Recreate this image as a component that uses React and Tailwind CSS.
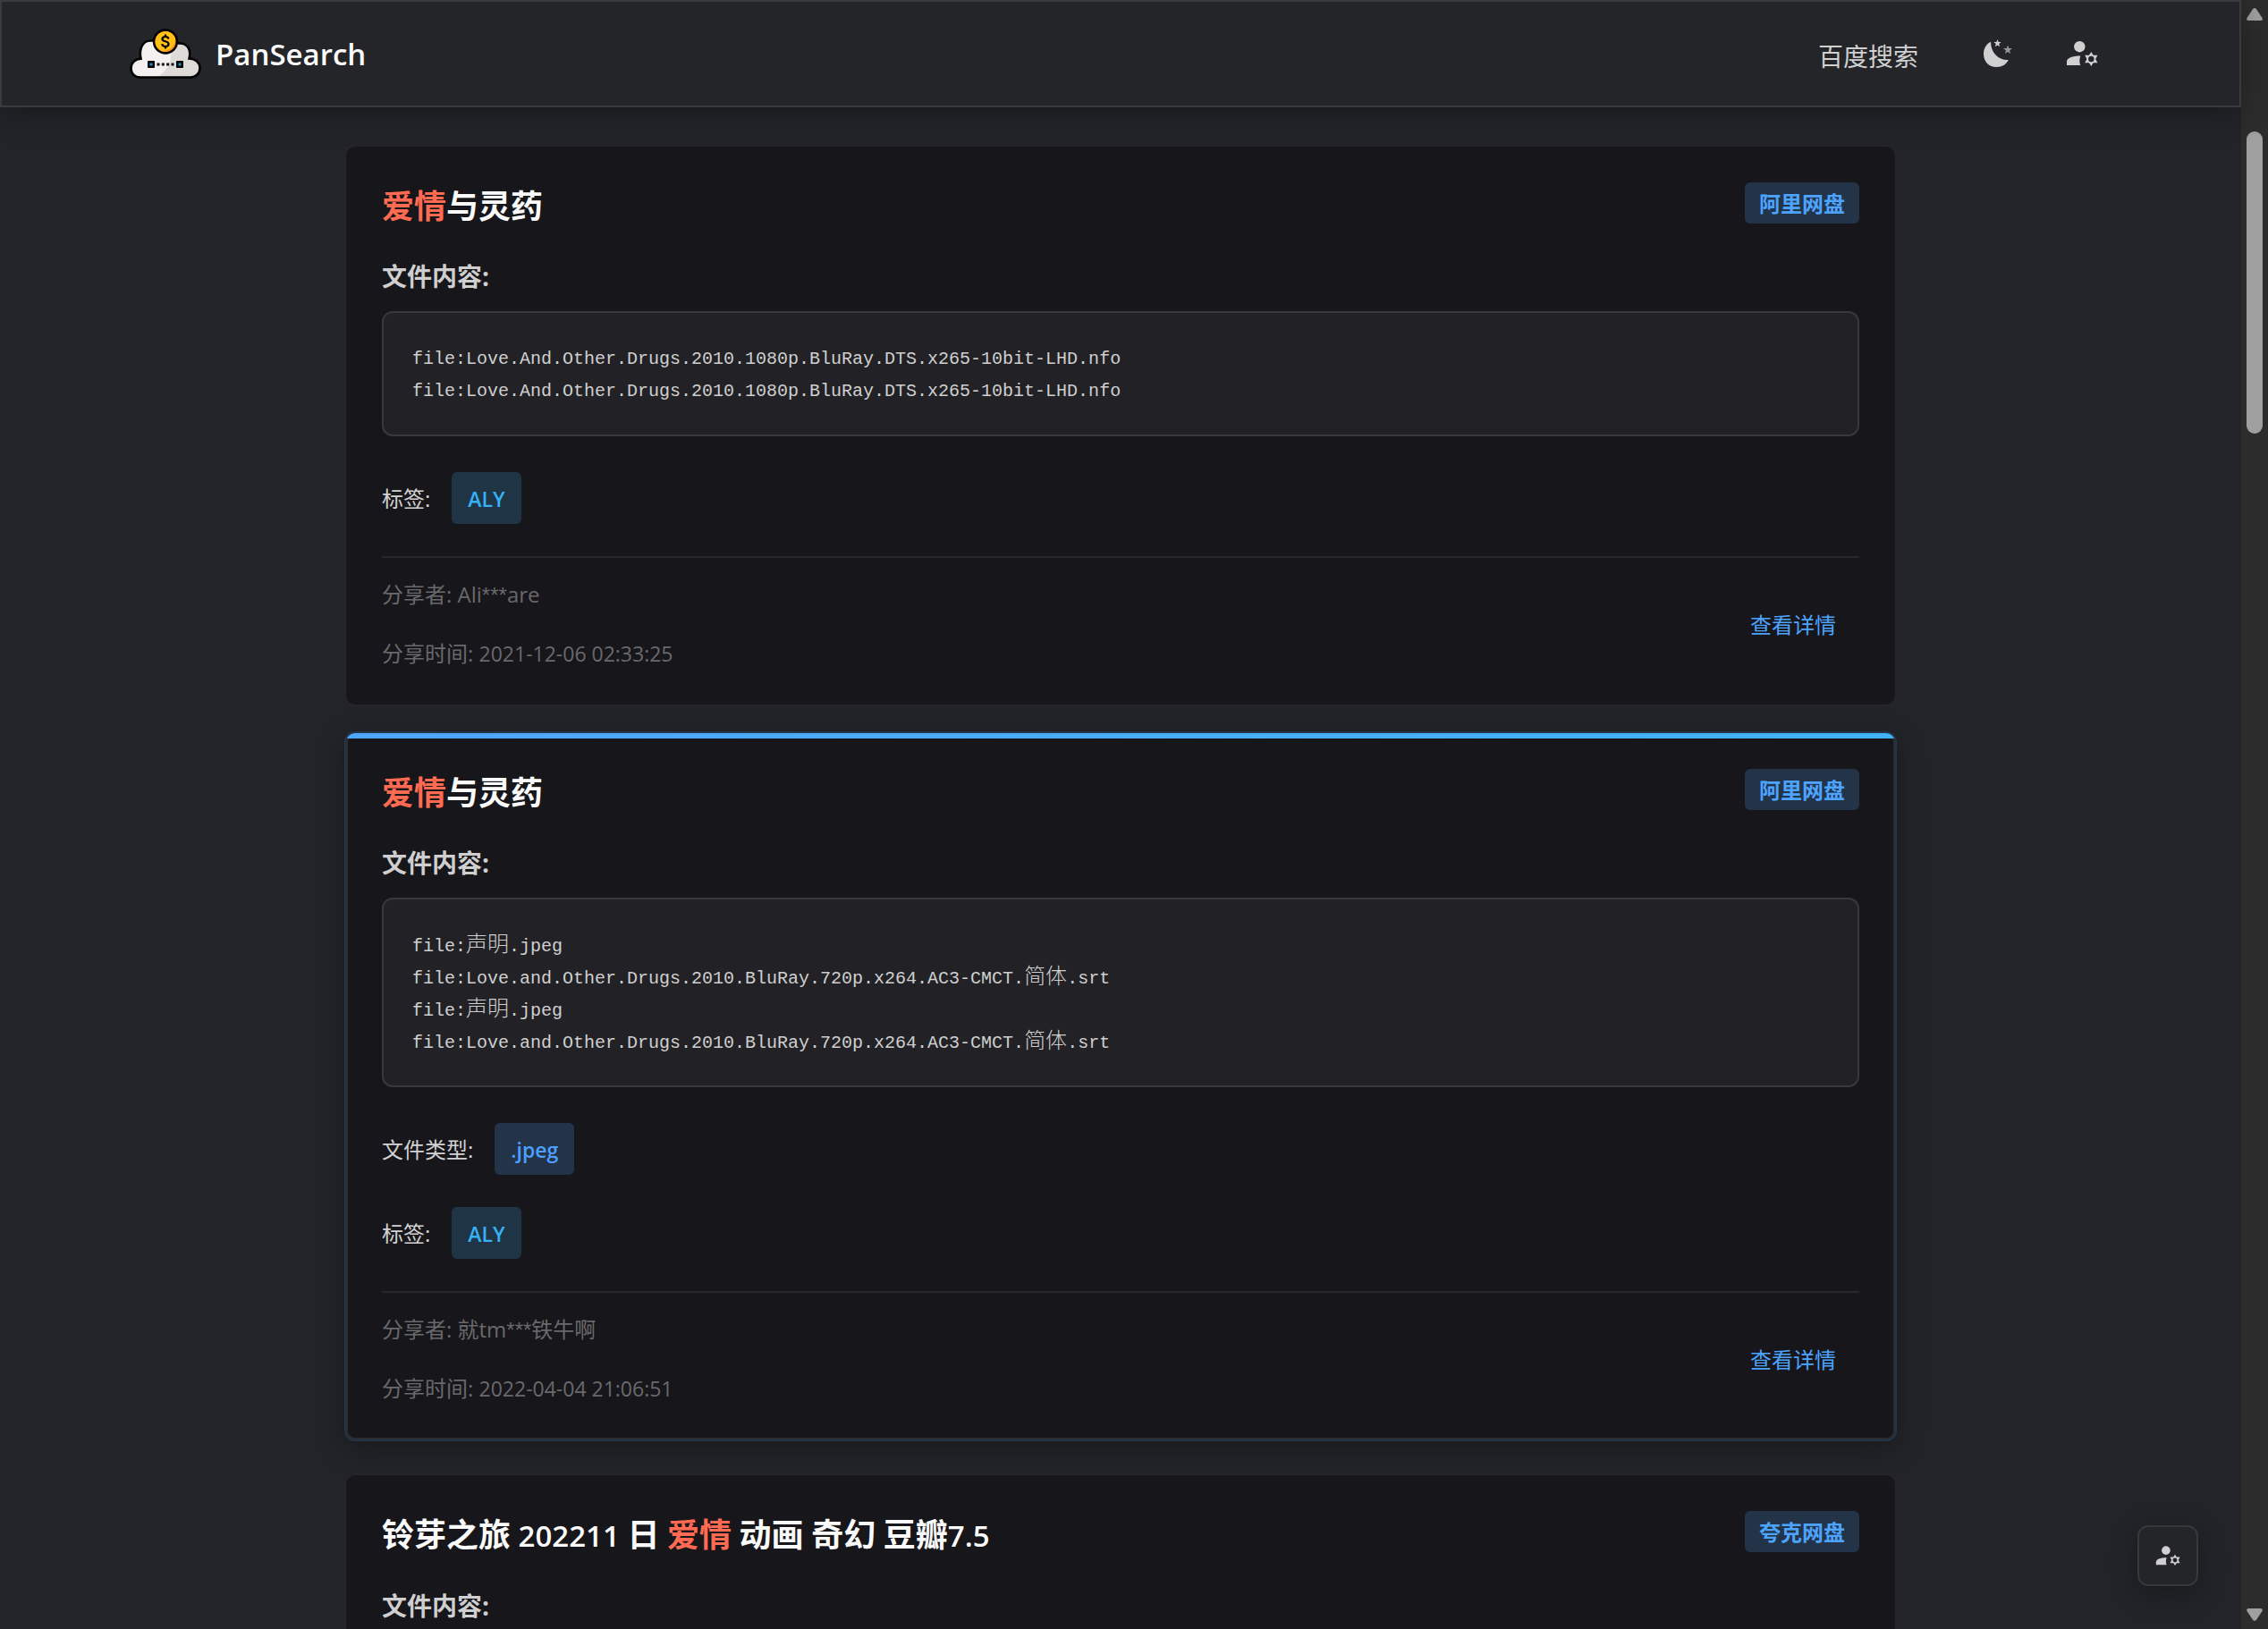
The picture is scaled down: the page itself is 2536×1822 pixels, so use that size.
import React from "react";

const results = [
  {
    id: 1,
    title: [{ cjk: "爱情", hit: true }, { cjk: "与灵药" }],
    source: "阿里网盘",
    files: [
      ["file:Love.And.Other.Drugs.2010.1080p.BluRay.DTS.x265-10bit-LHD.nfo"],
      ["file:Love.And.Other.Drugs.2010.1080p.BluRay.DTS.x265-10bit-LHD.nfo"],
    ],
    tags: ["ALY"],
    sharer: ["Ali", "***", "are"],
    time: "2021-12-06 02:33:25",
  },
  {
    id: 2,
    active: true,
    title: [{ cjk: "爱情", hit: true }, { cjk: "与灵药" }],
    source: "阿里网盘",
    files: [
      ["file:", "声明", ".jpeg"],
      ["file:Love.and.Other.Drugs.2010.BluRay.720p.x264.AC3-CMCT.", "简体", ".srt"],
      ["file:", "声明", ".jpeg"],
      ["file:Love.and.Other.Drugs.2010.BluRay.720p.x264.AC3-CMCT.", "简体", ".srt"],
    ],
    types: [".jpeg"],
    tags: ["ALY"],
    sharer: ["就tm", "***", "铁牛啊"],
    time: "2022-04-04 21:06:51",
  },
  {
    id: 3,
    title: [
      { cjk: "铃芽之旅" },
      { latin: " 202211 " },
      { cjk: "日" },
      { latin: " " },
      { cjk: "爱情", hit: true },
      { latin: " " },
      { cjk: "动画" },
      { latin: " " },
      { cjk: "奇幻" },
      { latin: " " },
      { cjk: "豆瓣" },
      { latin: "7.5" },
    ],
    source: "夸克网盘",
    files: [],
  },
];

function Logo() {
  return (
    <svg viewBox="0 0 80 56" className="h-14 w-20 shrink-0" aria-hidden="true">
      <path
        d="M12 54.5C5.500 54.500 1.500 50 1.500 44.500C1.500 38.500 6 33.800 12.500 33.800C10.200 23 14 13.500 23.500 13.500H32L50 16.500H56C65 16.500 69 24 66.500 33.500C73.500 33.500 78.500 38 78.500 44.300C78.500 50 74 54.500 68 54.500Z"
        fill="#f4f0ef"
      />
      <path
        d="M46.500 27C46 40 41 48 31 54.500H68C74 54.500 78.500 50 78.500 44.300C78.500 38 73.500 33.500 66.500 33.500C69 24 65 16.500 56 16.500Z"
        fill="#dedad8"
      />
      <path
        d="M12 54.500C5.500 54.500 1.500 50 1.500 44.500C1.500 38.500 6 33.800 12.500 33.800C10.200 23 14 13.500 23.500 13.500H28M54 16.500H56C65 16.500 69 24 66.500 33.500C73.500 33.500 78.500 38 78.500 44.300C78.500 50 74 54.500 68 54.500H12"
        fill="none"
        stroke="#000"
        strokeWidth="2.600"
      />
      <circle cx="40" cy="14.500" r="12.900" fill="#ff8a1e" stroke="#000" strokeWidth="2.600" />
      <path d="M40 2.900a11.600 11.600 0 0 0-4 22.400C46 25 51 19 51 11A11.600 11.600 0 0 0 40 2.900Z" fill="#ffc214" />
      <path
        d="M43.500 11.500C43 9.500 41.500 9 40 9C37.500 9 36.500 10.300 36.500 11.700C36.500 15.500 43.500 13 43.500 17.300C43.500 19 42 20 40 20C38 20 36.500 19.200 36.200 17.200M40 6.500V9M40 20V22.500"
        fill="none"
        stroke="#000"
        strokeWidth="2.200"
      />
      <rect x="20" y="36" width="8" height="8" rx="1" fill="#000" />
      <rect x="22.500" y="38.500" width="3" height="3" fill="#1989d8" />
      <rect x="52" y="36" width="8" height="8" rx="1" fill="#000" />
      <rect x="54.500" y="38.500" width="3" height="3" fill="#1989d8" />
      <path d="M30.500 40H50" stroke="#111" strokeWidth="3" strokeDasharray="3 2.330" />
    </svg>
  );
}

function MoonIcon() {
  return (
    <svg viewBox="0 0 32 32" className="size-8" fill="currentColor" aria-hidden="true">
      <path d="M8 2.800C3 5 0 10.500 0 16.500C0 25 6 31 14.500 31C20.500 31 25.500 28 27.800 23C18 24 8 16 8 2.800Z" />
      <path d="m15.500 0 1.100 3 3.100.1-2.500 2 .9 3.100-2.600-1.800-2.600 1.800.9-3.100-2.500-2 3.100-.1Z" />
      <path
        d="m27 6.400 1.300 3.500 3.700.1-2.900 2.400 1 3.600-3.100-2.100-3.100 2.100 1-3.600L22 10l3.700-.1Z"
        opacity=".65"
      />
    </svg>
  );
}

function UserSettingsIcon({ className }) {
  return (
    <svg viewBox="0 0 36 32" className={className} fill="currentColor" aria-hidden="true">
      <circle cx="15.300" cy="7.200" r="6.200" />
      <path d="M1 28V24C1 20 7 17.500 16.300 17.500C15 21 15 24.500 16.300 28Z" />
      <path
        fillRule="evenodd"
        d="M28.300 13 30.700 16.700H35.400L33.200 21 35.400 25.300H30.700L28.300 29 25.900 25.300H21.200L23.400 21 21.200 16.700H25.900ZM28.300 17.800A3.200 3.200 0 1 0 28.300 24.200A3.200 3.200 0 1 0 28.300 17.800Z"
      />
    </svg>
  );
}

function Title({ parts }) {
  return (
    <h2 className="text-4xl/[54px] font-bold text-[#fafafa]">
      {parts.map((part, i) =>
        part.latin ? (
          <span key={i} className="text-[33px]/[54px] font-semibold whitespace-pre">
            {part.latin}
          </span>
        ) : (
          <span key={i} className={part.hit ? "text-[#ff6b52]" : ""}>
            {part.cjk}
          </span>
        )
      )}
    </h2>
  );
}

function ChipRow({ label, items, chipClass }) {
  return (
    <div className="flex items-center gap-6">
      <span className="pt-0.5 text-2xl text-[#d2d2d2]">{label}:</span>
      {items.map((item) => (
        <span
          key={item}
          className={"flex h-[58px] items-center rounded-md px-[18px] pt-0.5 text-[23px] font-semibold " + chipClass}
        >
          {item}
        </span>
      ))}
    </div>
  );
}

function ResultCard({ item }) {
  return (
    <article
      className={
        "relative rounded-xl border-2 bg-[#17161a] p-10 " +
        (item.active
          ? "-translate-y-1 border-[#233547] shadow-[inset_0_0_0_2px_#2d2c30,0_8px_32px_rgba(0,0,0,0.3)]"
          : "border-[#25252a]")
      }
    >
      {item.active && (
        <div className="absolute inset-0 overflow-hidden rounded-[10px]">
          <div className="h-1.5 bg-linear-to-r from-[#4fa6ff] to-[#3fb2f5]" />
        </div>
      )}
      <div className="relative">
        <div className="flex items-start justify-between">
          <Title parts={item.title} />
          <span className="flex h-[46px] items-center rounded-md bg-[#233448] px-4 pt-0.5 text-2xl font-bold text-[#4da4ff]">
            {item.source}
          </span>
        </div>
        <h3 className="mt-[30px] text-[28px]/[42px] font-bold text-[#cfcfcf]">文件内容:</h3>
        <pre className="mt-[18px] overflow-hidden rounded-xl border-2 border-[#39393c] bg-[#222226] px-8 pt-[34px] pb-[30px] font-['Liberation_Mono','Noto_Sans_CJK_SC',monospace] text-xl/9 text-[#cfcfcf]">
          {item.files.map((line, i) => (
            <div key={i} className="h-9">
              {line.map((run, j) =>
                j === 1 ? (
                  <span key={j} className="text-2xl/9 font-light">
                    {run}
                  </span>
                ) : (
                  run
                )
              )}
            </div>
          ))}
        </pre>
        <div className="mt-10 flex flex-col gap-9">
          {item.types && (
            <ChipRow label="文件类型" items={item.types} chipClass="bg-[#233348] text-[#4d9fff]" />
          )}
          {item.tags && <ChipRow label="标签" items={item.tags} chipClass="bg-[#1f3545] text-[#36b1f5]" />}
        </div>
        {item.sharer && (
          <div className="mt-9 flex items-center justify-between border-t-2 border-[#28272b] pt-6">
            <div className="flex flex-col gap-8 text-[#69696c]">
              <p className="h-[34px] text-2xl/[34px]">
                分享者: {item.sharer[0]}
                <span className="font-['Liberation_Sans',sans-serif]">{item.sharer[1]}</span>
                {item.sharer[2]}
              </p>
              <p className="h-[34px] text-2xl/[34px]">
                分享时间: <time className="text-[23px]">{item.time}</time>
              </p>
            </div>
            <button type="button" className="px-[26px] pt-0.5 text-2xl text-[#4da4ff]">
              查看详情
            </button>
          </div>
        )}
      </div>
    </article>
  );
}

function Scrollbar() {
  return (
    <div className="flex w-[30px] shrink-0 flex-col items-center bg-[#2c2c2c] py-[9px]" aria-hidden="true">
      <svg viewBox="0 0 18 14" className="h-3.5 w-[18px]" fill="#9f9f9f">
        <path d="M7 1.200Q9-1 11 1.200L17.500 11Q18.500 14 16 14H2Q-.5 14 .5 11Z" />
      </svg>
      <div className="mt-[124px] h-[338px] w-[18px] rounded-full bg-[#9f9f9f]" />
      <svg viewBox="0 0 18 14" className="mt-auto h-3.5 w-[18px]" fill="#9f9f9f">
        <path d="M7 12.800Q9 15 11 12.800L17.500 3Q18.500 0 16 0H2Q-.5 0 .5 3Z" />
      </svg>
    </div>
  );
}

export default function App() {
  return (
    <div className="flex h-screen overflow-hidden bg-[#232429] font-['Open_Sans','Noto_Sans_CJK_SC',sans-serif]">
      <div className="flex min-w-0 flex-1 flex-col">
        <header className="relative z-10 flex h-[120px] shrink-0 items-center justify-between border-2 border-[#3a3b3f] bg-[#242529] pr-[158px] pl-[143px] shadow-[0_8px_32px_rgba(0,0,0,0.3)]">
          <a href="#home" className="flex items-center gap-4">
            <Logo />
            <span className="pt-0.5 text-[33px]/[48px] font-semibold text-[#fafafa]">PanSearch</span>
          </a>
          <nav className="flex items-center text-[#d0d0d0]">
            <a href="#baidu" className="mr-[73px] pt-1.5 text-[28px]/[42px]">
              百度搜索
            </a>
            <button type="button" aria-label="切换主题" className="mr-[60px]">
              <MoonIcon />
            </button>
            <button type="button" aria-label="用户设置" className="pt-0.5">
              <UserSettingsIcon className="h-8 w-9" />
            </button>
          </nav>
        </header>
        <main className="min-h-0 flex-1 overflow-hidden pt-[42px]">
          <div className="mx-auto flex w-full max-w-[1736px] flex-col gap-8">
            {results.map((item) => (
              <ResultCard key={item.id} item={item} />
            ))}
          </div>
        </main>
      </div>
      <Scrollbar />
      <button
        type="button"
        aria-label="设置"
        className="fixed right-[78px] bottom-12 z-20 flex size-[68px] items-center justify-center rounded-xl border-2 border-[#37383c] bg-[#242529] pt-0.5 text-[#d0d0d0] shadow-[0_8px_32px_rgba(0,0,0,0.3)]"
      >
        <UserSettingsIcon className="h-[26px] w-7" />
      </button>
    </div>
  );
}
